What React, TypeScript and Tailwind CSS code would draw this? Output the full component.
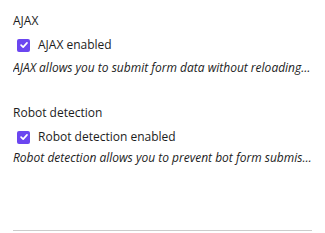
import React from 'react';

const settings = [
  {
    title: 'AJAX',
    label: 'AJAX enabled',
    help: 'AJAX allows you to submit form data without reloading the page and is recommended',
  },
  {
    title: 'Robot detection',
    label: 'Robot detection enabled',
    help: 'Robot detection allows you to prevent bot form submissions from spam',
  },
];

const Check: React.FC = () => (
  <span className="flex h-[13px] w-[13px] shrink-0 items-center justify-center rounded-[2px] bg-[#6b46f0]">
    <svg viewBox="0 0 12 12" className="h-[10px] w-[10px]" fill="none" stroke="white" strokeWidth="2" strokeLinecap="round" strokeLinejoin="round">
      <path d="M2.5 6.2 5 8.6 9.6 3.4" />
    </svg>
  </span>
);

const App: React.FC = () => {
  return (
    <div className="h-[233px] w-[325px] bg-white px-[13px] pt-[13px] text-[#1c1c1c] font-['Open_Sans',sans-serif]">
      {settings.map((s, i) => (
        <div key={s.title} className={i > 0 ? 'mt-[29px]' : ''}>
          <div className="text-[12px] leading-[16px]">{s.title}</div>
          <label className="mt-[8px] flex items-center gap-[8px] pl-[4px] text-[12px] leading-[16px]">
            <Check />
            <span>{s.label}</span>
          </label>
          <p className={`truncate text-[12px] italic leading-[16px] ${i > 0 ? 'mt-[5px]' : 'mt-[7px]'}`}>{s.help}</p>
        </div>
      ))}
      <div className="mt-[64px] border-t border-[#cccccc]" />
    </div>
  );
};

export default App;
